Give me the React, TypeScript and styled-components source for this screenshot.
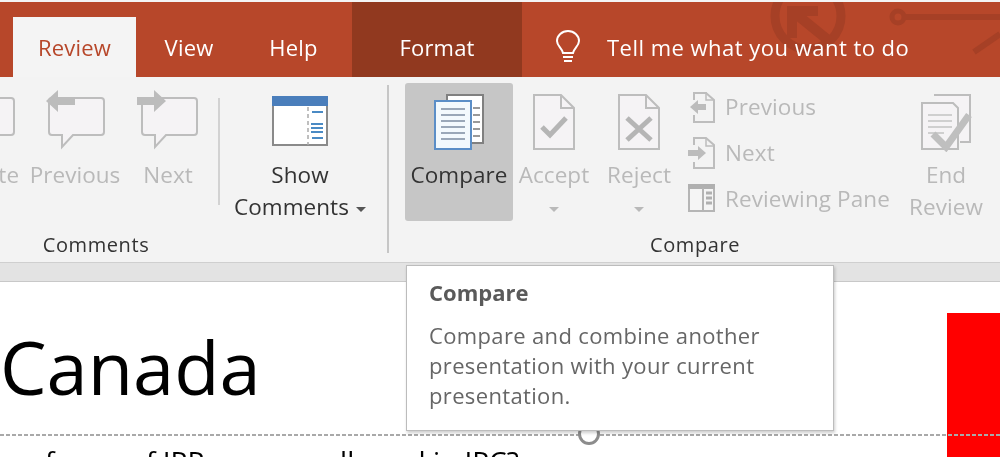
import React from 'react';
import styled, { createGlobalStyle } from 'styled-components';

const GlobalStyle = createGlobalStyle`
  html, body {
    margin: 0;
    height: 457px;
    overflow: hidden;
    background: #fff;
    font-family: 'Open Sans', 'Liberation Sans', sans-serif;
  }
`;

const Page = styled.div`
  width: 1000px;
  height: 457px;
  display: flex;
  flex-direction: column;
  position: relative;
  overflow: hidden;
  background: #f4f4f4;
  padding-top: 2px;
  box-sizing: border-box;
  filter: blur(0.4px);
`;

const TitleBar = styled.div`
  position: relative;
  display: flex;
  align-items: flex-end;
  flex: none;
  height: 75px;
  padding-left: 13px;
  background: #b7472a;
  overflow: hidden;
`;

const Watermark = styled.svg`
  position: absolute;
  top: 0;
  right: 0;
`;

interface TabProps {
  $width: number;
  $active?: boolean;
}

const Tab = styled.div<TabProps>`
  position: relative;
  flex: none;
  width: ${({ $width }) => $width}px;
  height: 60px;
  display: flex;
  align-items: center;
  justify-content: center;
  font-size: 22px;
  letter-spacing: 0.2px;
  color: ${({ $active }) => ($active ? '#b7472a' : '#fff')};
  background: ${({ $active }) => ($active ? '#f4f4f4' : 'transparent')};
`;

const FormatTab = styled(Tab)`
  height: 75px;
  margin-left: 7px;
  padding-top: 15px;
  box-sizing: border-box;
  background: #91391f;
`;

const TellMe = styled.div`
  position: relative;
  height: 60px;
  display: flex;
  align-items: center;
  gap: 26px;
  margin-left: 33px;
  font-size: 22px;
  letter-spacing: 0.48px;
  color: #fff;
  white-space: nowrap;
`;

const Ribbon = styled.div`
  display: flex;
  flex: none;
  height: 185px;
  background: #f3f3f3;
  overflow: hidden;
`;

interface GroupProps {
  $width: number;
  $offset?: number;
}

const Group = styled.section<GroupProps>`
  flex: none;
  width: ${({ $width }) => $width}px;
  margin-left: ${({ $offset }) => $offset ?? 0}px;
  display: flex;
  flex-direction: column;
  box-sizing: border-box;
`;

const GroupRow = styled.div<{ $end?: boolean }>`
  display: flex;
  height: 138px;
  margin-top: 6px;
  justify-content: ${({ $end }) => ($end ? 'flex-end' : 'flex-start')};
  padding: ${({ $end }) => ($end ? '0 12px 0 0' : '0 0 0 16px')};
`;

const GroupLabel = styled.div`
  margin-top: 11px;
  text-align: center;
  font-size: 20px;
  letter-spacing: 0.6px;
  line-height: 26px;
  color: #333;
`;

const GroupDivider = styled.div`
  flex: none;
  width: 2px;
  height: 168px;
  margin-top: 8px;
  background: #c6c6c6;
`;

const InnerDivider = styled.div`
  flex: none;
  width: 2px;
  height: 107px;
  margin: 15px 5px 0 10px;
  background: #d2d2d2;
`;

interface LargeButtonProps {
  $width: number;
  $pressed?: boolean;
  $disabled?: boolean;
}

const LargeButton = styled.div<LargeButtonProps>`
  flex: none;
  width: ${({ $width }) => $width}px;
  display: flex;
  flex-direction: column;
  align-items: center;
  border-radius: 3px;
  background: ${({ $pressed }) => ($pressed ? '#c6c6c6' : 'transparent')};
  color: ${({ $disabled }) => ($disabled ? '#b9b9b9' : '#333')};
`;

const DeleteButton = styled(LargeButton)`
  margin-right: 8px;
`;

const IconSlot = styled.div<{ $top: number }>`
  flex: none;
  height: 76px;
  display: flex;
  justify-content: center;
  align-items: flex-start;
  padding-top: ${({ $top }) => $top}px;
  box-sizing: border-box;
`;

const ButtonLabel = styled.div`
  font-size: 22.5px;
  letter-spacing: 0.05px;
  line-height: 32px;
  white-space: nowrap;
  text-align: center;
`;

const Caret = styled.span<{ $disabled?: boolean; $alone?: boolean }>`
  display: inline-block;
  width: 0;
  height: 0;
  margin-left: ${({ $alone }) => ($alone ? 0 : 7)}px;
  vertical-align: 3px;
  border-left: 5px solid transparent;
  border-right: 5px solid transparent;
  border-top: 5px solid ${({ $disabled }) => ($disabled ? '#b9b9b9' : '#555')};
`;

const SmallStack = styled.div`
  flex: none;
  width: 215px;
  margin-left: 5px;
  padding-top: 1px;
  display: flex;
  flex-direction: column;
`;

const SmallButton = styled.div`
  height: 46px;
  display: flex;
  align-items: center;
  gap: 10px;
  font-size: 22.5px;
  letter-spacing: 0.1px;
  color: #b9b9b9;
  white-space: nowrap;
`;

const Strip = styled.div`
  flex: none;
  height: 18px;
  background: #e3e3e3;
  border-top: 1px solid #cfcfcf;
  border-bottom: 1px solid #c8c8c8;
`;

const Slide = styled.div`
  position: relative;
  flex: 1;
  background: #fff;
  overflow: hidden;
`;

const RedBlock = styled.div`
  position: absolute;
  top: 31px;
  right: 0;
  bottom: 0;
  width: 53px;
  background: #ff0000;
`;

const SlideTitle = styled.h1`
  margin: 0;
  padding: 35px 0 0 0;
  height: 114px;
  box-sizing: border-box;
  font-size: 74px;
  font-weight: 400;
  line-height: 100px;
  color: #000;
`;

const TextBox = styled.div`
  position: relative;
  margin-top: 38px;
  padding: 8px 0 0 45px;
  background: repeating-linear-gradient(90deg, #a9a9a9 0 4px, transparent 4px 6px) top / 100% 2px no-repeat;
  font-size: 28px;
  line-height: 38px;
  color: #000;
  white-space: nowrap;
`;

const Handle = styled.div`
  position: absolute;
  left: 578px;
  top: -11px;
  width: 16px;
  height: 16px;
  border: 3px solid #8c8c8c;
  border-radius: 50%;
  background: #fff;
`;

const Tooltip = styled.aside`
  position: absolute;
  left: 406px;
  top: 265px;
  width: 428px;
  height: 166px;
  box-sizing: border-box;
  padding: 12px 22px;
  background: #fff;
  border: 1px solid #bcbcbc;
  box-shadow: 1px 2px 3px rgba(0, 0, 0, 0.2);
`;

const TooltipTitle = styled.div`
  font-size: 22px;
  font-weight: 700;
  line-height: 28px;
  color: #5a5a5a;
`;

const TooltipBody = styled.div`
  margin-top: 14px;
  font-size: 22px;
  letter-spacing: 0.35px;
  line-height: 30px;
  color: #666;
`;

const stroke = '#bdbdbd';

const CommentIcon = ({ dir }: { dir: 'left' | 'right' | 'none' }) => (
  <svg width="62" height="62" viewBox="0 0 62 62" fill="none">
    <path
      d="M8 10H57a3 3 0 0 1 3 3V44a3 3 0 0 1-3 3H29L18 59V47H8a3 3 0 0 1-3-3V13a3 3 0 0 1 3-3Z"
      stroke={stroke}
      strokeWidth="2"
      fill="#f5f3f5"
    />
    {dir === 'left' && <path d="M2 13 14 2V9H31V17H14V24Z" fill="#bcbcbc" />}
    {dir === 'right' && <path d="M29 13 17 2V9H0V17H17V24Z" fill="#bcbcbc" />}
  </svg>
);

const ShowCommentsIcon = () => (
  <svg width="58" height="52" viewBox="0 0 58 52" fill="none">
    <rect x="2" y="2" width="54" height="48" fill="#fff" stroke="#8a8a8a" strokeWidth="2" />
    <rect x="1" y="1" width="56" height="10" fill="#4a7ebb" />
    <path d="M37 12V50" stroke="#aaa" strokeWidth="1.5" strokeDasharray="4 3" />
    <path d="M41 17H52M40 29H52M40 33H52M40 37H52M41 43H52" stroke="#4a8ac4" strokeWidth="2" />
  </svg>
);

const CompareIcon = () => (
  <svg width="50" height="56" viewBox="0 0 50 56" fill="none">
    <rect x="13" y="1" width="36" height="48" fill="#fff" stroke="#808080" strokeWidth="2" />
    <path d="M39 14H46M39 21H46M39 28H46M39 35H46M39 42H46" stroke="#999" strokeWidth="2" />
    <rect x="1" y="7" width="36" height="48" fill="#f3f9fd" stroke="#5b8ec7" strokeWidth="2" />
    <path d="M7 15H31M7 21H31M7 27H31M7 33H31M7 39H31M7 45H31" stroke="#9aa7b8" strokeWidth="2" />
  </svg>
);

const PageIcon = ({ mark }: { mark: 'check' | 'cross' }) => (
  <svg width="42" height="56" viewBox="0 0 42 56" fill="none">
    <path d="M1 1H28L41 14V55H1Z" fill="#f5f3f5" stroke={stroke} strokeWidth="2" />
    <path d="M28 1V14H41" stroke={stroke} strokeWidth="2" />
    {mark === 'check' ? (
      <path d="M9 33 17 41 33 24" stroke="#b5b5b5" strokeWidth="5" />
    ) : (
      <path d="M9 24 33 46M33 24 9 46" stroke="#b5b5b5" strokeWidth="5" />
    )}
  </svg>
);

const SmallPageIcon = ({ dir }: { dir: 'left' | 'right' }) => (
  <svg width="27" height="32" viewBox="0 0 27 32" fill="none">
    <path
      d={dir === 'left' ? 'M6 9V2H18L26 9V31H6V24' : 'M6 8V1H18L26 8V31H6V25'}
      stroke={stroke}
      strokeWidth="2"
    />
    <path d="M18 1V9H26" stroke={stroke} strokeWidth="1.5" />
    {dir === 'left' ? (
      <path d="M2 16 10 9V13H18V19H10V23Z" fill="#bcbcbc" />
    ) : (
      <path d="M18 16 10 9V13H0V19H10V23Z" fill="#bcbcbc" />
    )}
  </svg>
);

const PaneIcon = () => (
  <svg width="27" height="28" viewBox="0 0 27 28" fill="none">
    <rect x="1" y="2" width="25" height="25" fill="#f5f5f5" stroke="#b5b5b5" strokeWidth="2" />
    <rect x="0" y="0" width="27" height="5" fill="#b0b0b0" />
    <path d="M15 4V27" stroke="#b5b5b5" strokeWidth="2" />
    <path d="M18 9H24M18 14H24M18 19H24" stroke="#b0b0b0" strokeWidth="3" />
  </svg>
);

const EndReviewIcon = () => (
  <svg width="52" height="58" viewBox="0 0 52 58" fill="none">
    <path d="M14 1H50V48H40" fill="#f5f3f5" stroke={stroke} strokeWidth="2" />
    <path d="M2 9H33L38 14V55H2Z" fill="#f5f3f5" stroke={stroke} strokeWidth="2" />
    <path d="M8 21H32M8 27H32M8 33H32M8 39H24" stroke="#cfcfcf" strokeWidth="2" />
    <path d="M13 40 26 53 49 21" stroke="#bfbfbf" strokeWidth="7" />
  </svg>
);

const BulbIcon = () => (
  <svg width="26" height="34" viewBox="0 0 26 34" fill="none" stroke="#fff" strokeWidth="2">
    <path d="M8 23C7 18 2 16 2 11A11 10 0 0 1 24 11C24 16 19 18 18 23Z" />
    <path d="M8 27H18M9 31H17" />
  </svg>
);

const App: React.FC = () => {
  return (
    <>
      <GlobalStyle />
      <Page>
        <TitleBar>
          <Watermark width="240" height="75" viewBox="0 0 240 75" fill="none" stroke="#a64026">
            <circle cx="48" cy="14" r="33" strokeWidth="9" />
            <path d="M68 38 36 12M32 36V9H58" strokeWidth="10" />
            <circle cx="138" cy="15" r="6" strokeWidth="5" />
            <path d="M145 15H240" strokeWidth="6" />
            <path d="M214 50 240 32" strokeWidth="6" />
          </Watermark>
          <Tab $width={123} $active>Review</Tab>
          <Tab $width={106}>View</Tab>
          <Tab $width={103}>Help</Tab>
          <FormatTab $width={170}>Format</FormatTab>
          <TellMe>
            <BulbIcon />
            Tell me what you want to do
          </TellMe>
        </TitleBar>

        <Ribbon>
          <Group $width={582} $offset={-195}>
            <GroupRow $end>
              <DeleteButton $width={58} $disabled>
                <IconSlot $top={5}>
                  <CommentIcon dir="none" />
                </IconSlot>
                <ButtonLabel>Delete</ButtonLabel>
              </DeleteButton>
              <LargeButton $width={106} $disabled>
                <IconSlot $top={5}>
                  <CommentIcon dir="left" />
                </IconSlot>
                <ButtonLabel>Previous</ButtonLabel>
              </LargeButton>
              <LargeButton $width={80} $disabled>
                <IconSlot $top={5}>
                  <CommentIcon dir="right" />
                </IconSlot>
                <ButtonLabel>Next</ButtonLabel>
              </LargeButton>
              <InnerDivider />
              <LargeButton $width={150}>
                <IconSlot $top={12}>
                  <ShowCommentsIcon />
                </IconSlot>
                <ButtonLabel>Show</ButtonLabel>
                <ButtonLabel>
                  Comments
                  <Caret />
                </ButtonLabel>
              </LargeButton>
            </GroupRow>
            <GroupLabel>Comments</GroupLabel>
          </Group>
          <GroupDivider />
          <Group $width={612}>
            <GroupRow>
              <LargeButton $width={108} $pressed>
                <IconSlot $top={11}>
                  <CompareIcon />
                </IconSlot>
                <ButtonLabel>Compare</ButtonLabel>
              </LargeButton>
              <LargeButton $width={82} $disabled>
                <IconSlot $top={11}>
                  <PageIcon mark="check" />
                </IconSlot>
                <ButtonLabel>Accept</ButtonLabel>
                <ButtonLabel>
                  <Caret $disabled $alone />
                </ButtonLabel>
              </LargeButton>
              <LargeButton $width={88} $disabled>
                <IconSlot $top={11}>
                  <PageIcon mark="cross" />
                </IconSlot>
                <ButtonLabel>Reject</ButtonLabel>
                <ButtonLabel>
                  <Caret $disabled $alone />
                </ButtonLabel>
              </LargeButton>
              <SmallStack>
                <SmallButton>
                  <SmallPageIcon dir="left" />
                  Previous
                </SmallButton>
                <SmallButton>
                  <SmallPageIcon dir="right" />
                  Next
                </SmallButton>
                <SmallButton>
                  <PaneIcon />
                  Reviewing Pane
                </SmallButton>
              </SmallStack>
              <LargeButton $width={86} $disabled>
                <IconSlot $top={11}>
                  <EndReviewIcon />
                </IconSlot>
                <ButtonLabel>End</ButtonLabel>
                <ButtonLabel>Review</ButtonLabel>
              </LargeButton>
            </GroupRow>
            <GroupLabel>Compare</GroupLabel>
          </Group>
        </Ribbon>

        <Strip />

        <Slide>
          <RedBlock />
          <SlideTitle>Canada</SlideTitle>
          <TextBox>
            <Handle />
            forms of IPP are now allowed in IPC?
          </TextBox>
        </Slide>

        <Tooltip>
          <TooltipTitle>Compare</TooltipTitle>
          <TooltipBody>
            Compare and combine another
            <br />
            presentation with your current
            <br />
            presentation.
          </TooltipBody>
        </Tooltip>
      </Page>
    </>
  );
};

export default App;
